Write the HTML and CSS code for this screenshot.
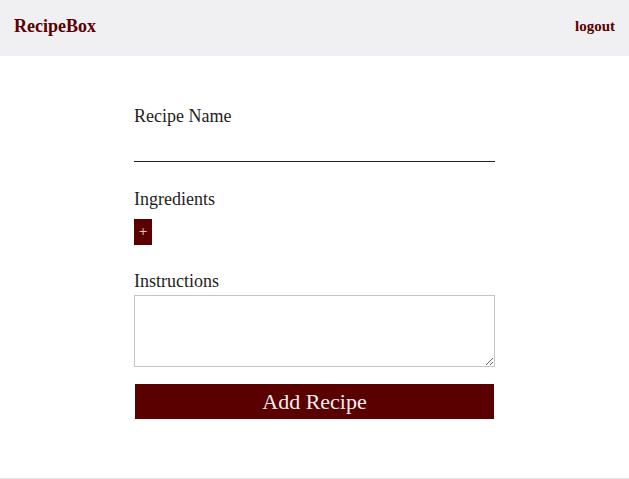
FILE: index.html
```html
<!DOCTYPE html>
<html lang="en">
<head>
<meta charset="utf-8">
<title>RecipeBox</title>
<link rel="stylesheet" href="styles.css">
</head>
<body>
<div class="page">
  <header class="topbar">
    <a class="brand" href="#">RecipeBox</a>
    <a class="logout" href="#">logout</a>
  </header>
  <main class="main">
    <form class="recipe-form">
      <label class="label label-name">Recipe Name</label>
      <input class="name-input" type="text">
      <label class="label label-ing">Ingredients</label>
      <div class="ing-row"><button type="button" class="add-ing">+</button></div>
      <label class="label label-ins">Instructions</label>
      <textarea class="instructions"></textarea>
      <button type="button" class="submit">Add Recipe</button>
    </form>
  </main>
  <footer class="footer"></footer>
</div>
</body>
</html>
```

FILE: styles.css
```css
* { box-sizing: border-box; }
html, body { margin: 0; padding: 0; }
body {
  font-family: "Liberation Serif", "Times New Roman", serif;
  background: #ffffff;
  color: #1e1e1e;
}
.page {
  height: 100vh;
  display: flex;
  flex-direction: column;
  overflow: hidden;
}
.topbar {
  height: 56px;
  flex: none;
  background: #f0f0f2;
  display: flex;
  align-items: center;
  justify-content: space-between;
  padding: 0 14px;
}
.brand {
  color: #5a0000;
  font-weight: bold;
  font-size: 18px;
  text-decoration: none;
  margin-top: -3px;
}
.logout {
  color: #5a0000;
  font-weight: bold;
  font-size: 15px;
  text-decoration: none;
  margin-top: -3px;
}
.main {
  flex: 1;
  padding-top: 50px;
}
.recipe-form {
  width: 361px;
  margin: 0 auto;
  display: flex;
  flex-direction: column;
  align-items: stretch;
}
.label {
  font-size: 18px;
  line-height: 20px;
  color: #1e1e1e;
  display: block;
}
.name-input {
  margin-top: 6px;
  height: 30px;
  border: none;
  border-bottom: 1px solid #222;
  outline: none;
  background: transparent;
  font-family: inherit;
  font-size: 16px;
  padding: 0;
}
.label-ing { margin-top: 27px; }
.ing-row {
  margin-top: 10px;
  display: flex;
}
.add-ing {
  width: 18px;
  height: 26px;
  background: #5a0000;
  color: #e6c4c4;
  border: none;
  padding: 0;
  font-family: "DejaVu Sans", sans-serif;
  font-size: 11px;
  line-height: 26px;
}
.label-ins { margin-top: 26px; }
.instructions {
  margin-top: 4px;
  height: 72px;
  border: 1px solid #c4c4c4;
  resize: vertical;
  font-family: inherit;
}
.submit {
  margin: 17px 1px 0;
  height: 35px;
  background: #5a0000;
  color: #f4eeee;
  border: none;
  font-family: inherit;
  font-size: 22px;
  line-height: 35px;
  padding: 0;
}
.footer {
  flex: none;
  height: 1px;
  background: #e2e2e2;
}
```
